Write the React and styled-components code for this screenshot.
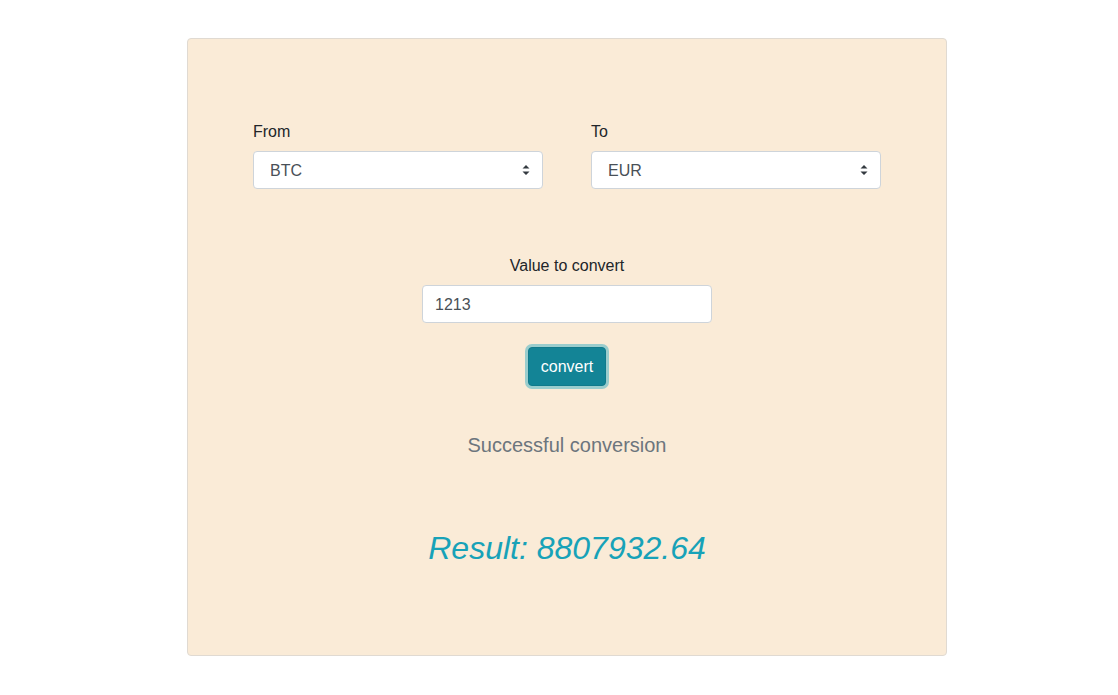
import React, { useState } from 'react';
import styled, { createGlobalStyle } from 'styled-components';

const GlobalStyle = createGlobalStyle`
  body {
    margin: 0;
    background: #ffffff;
    font-family: 'Liberation Sans', Arial, sans-serif;
    color: #212529;
  }
`;

const Page = styled.div`
  padding: 38px 0 0 187px;
`;

const Card = styled.div`
  width: 760px;
  box-sizing: border-box;
  min-height: 618px;
  background: #faebd7;
  border: 1px solid #e0dad2;
  border-radius: 4px;
  padding: 80px 65px 88px;
  display: flex;
  flex-direction: column;
  align-items: center;
`;

const Row = styled.div`
  display: grid;
  grid-template-columns: 290px 290px;
  column-gap: 48px;
  width: 100%;
`;

const Field = styled.div`
  display: flex;
  flex-direction: column;
  align-items: ${(p) => (p.$center ? 'center' : 'stretch')};
  width: ${(p) => (p.$width ? p.$width : 'auto')};
  margin-top: ${(p) => p.$top || '0'};
`;

const Label = styled.label`
  font-size: 16px;
  line-height: 24px;
  padding-top: 1px;
  margin-bottom: 7px;
  color: #212529;
`;

const SelectWrap = styled.div`
  position: relative;
  width: 100%;
`;

const Select = styled.select`
  appearance: none;
  -webkit-appearance: none;
  width: 100%;
  height: 38px;
  box-sizing: border-box;
  padding: 6px 36px 6px 16px;
  font-family: inherit;
  font-size: 16px;
  color: #495057;
  background: #fff;
  border: 1px solid #ced4da;
  border-radius: 4px;
  outline: none;
`;

const Arrows = styled.svg`
  position: absolute;
  right: 12px;
  top: 13px;
  pointer-events: none;
`;

const Input = styled.input`
  width: 100%;
  height: 38px;
  box-sizing: border-box;
  padding: 7px 12px 5px;
  font-family: inherit;
  font-size: 16px;
  color: #495057;
  background: #fff;
  border: 1px solid #ced4da;
  border-radius: 4px;
  outline: none;
`;

const Button = styled.button`
  margin-top: 24px;
  height: 39px;
  padding: 7px 12px 6px;
  font-family: inherit;
  font-size: 16px;
  line-height: 24px;
  color: #fff;
  background: #138496;
  border: 1px solid #117a8b;
  border-radius: 4px;
  box-shadow: 0 0 0 3px rgba(58, 176, 195, 0.5);
  cursor: pointer;
`;

const Status = styled.p`
  margin: 44px 0 0;
  font-size: 20px;
  line-height: 30px;
  color: #6c757d;
`;

const Result = styled.h2`
  margin: 69px 0 0;
  font-size: 32px;
  line-height: 38px;
  font-weight: 400;
  font-style: italic;
  color: #17a2b8;
`;

const SortIcon = () => (
  <Arrows width="10" height="12" viewBox="0 0 10 12">
    <path d="M5 1 L8.5 4.6 H1.5 Z M5 11 L1.5 7.4 H8.5 Z" fill="#343a40" />
  </Arrows>
);

const CurrencySelect = ({ value, onChange }) => (
  <SelectWrap>
    <Select value={value} onChange={(e) => onChange(e.target.value)}>
      <option value="BTC">BTC</option>
      <option value="EUR">EUR</option>
      <option value="USD">USD</option>
      <option value="ETH">ETH</option>
    </Select>
    <SortIcon />
  </SelectWrap>
);

const App = () => {
  const [from, setFrom] = useState('BTC');
  const [to, setTo] = useState('EUR');
  const [amount, setAmount] = useState('1213');

  return (
    <Page>
      <GlobalStyle />
      <Card>
        <Row>
          <Field>
            <Label>From</Label>
            <CurrencySelect value={from} onChange={setFrom} />
          </Field>
          <Field>
            <Label>To</Label>
            <CurrencySelect value={to} onChange={setTo} />
          </Field>
        </Row>

        <Field $center $width="290px" $top="64px">
          <Label>Value to convert</Label>
          <Input value={amount} onChange={(e) => setAmount(e.target.value)} />
        </Field>
        <Button>convert</Button>

        <Status>Successful conversion</Status>
        <Result>Result: 8807932.64</Result>
      </Card>
    </Page>
  );
};

export default App;
